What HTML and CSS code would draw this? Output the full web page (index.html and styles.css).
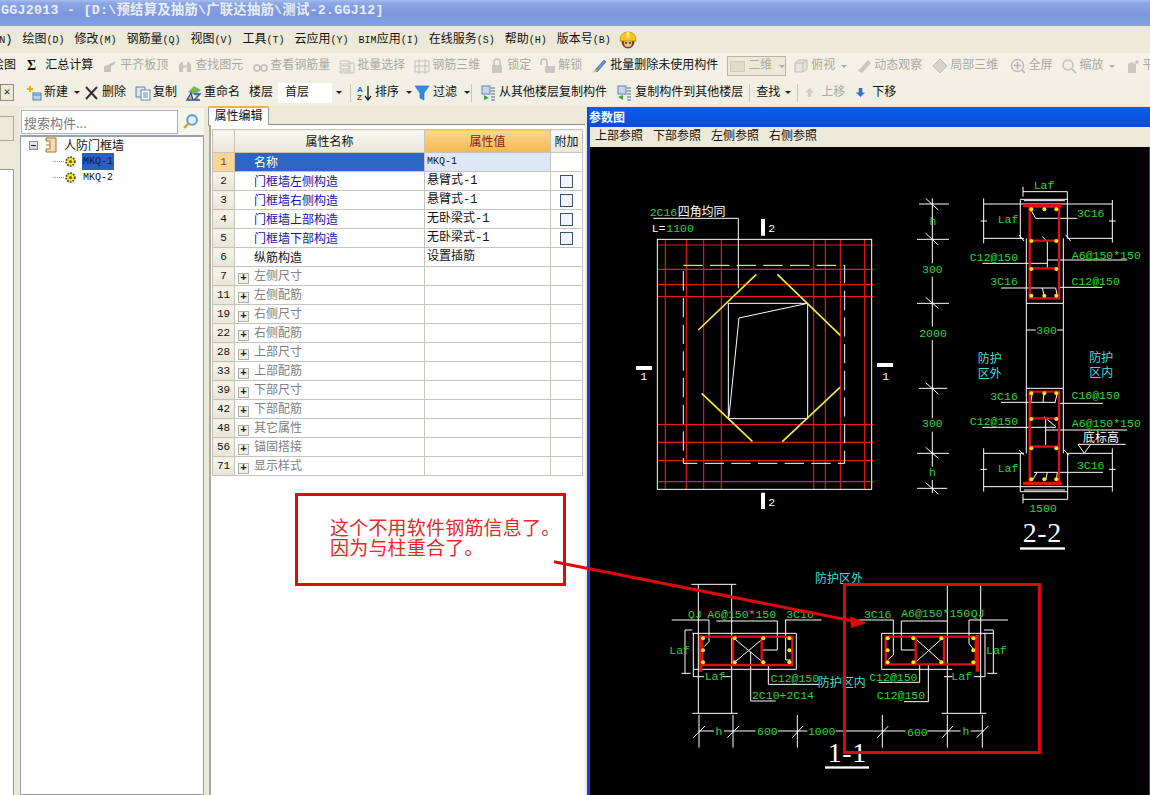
FILE: index.html
```html
<!DOCTYPE html>
<html lang="zh">
<head>
<meta charset="utf-8">
<title>GGJ2013</title>
<link rel="stylesheet" href="styles.css">
</head>
<body>
<div class="app">
  <div class="titlebar">GGJ2013 - [D:\预结算及抽筋\广联达抽筋\测试-2.GGJ12]</div>

  <div class="menubar">
    <span class="clip">(<span class="key">N</span>)</span>
    <span>绘图<span class="key">(D)</span></span>
    <span>修改<span class="key">(M)</span></span>
    <span>钢筋量<span class="key">(Q)</span></span>
    <span>视图<span class="key">(V)</span></span>
    <span>工具<span class="key">(T)</span></span>
    <span>云应用<span class="key">(Y)</span></span>
    <span><span class="key">BIM</span>应用<span class="key">(I)</span></span>
    <span>在线服务<span class="key">(S)</span></span>
    <span>帮助<span class="key">(H)</span></span>
    <span>版本号<span class="key">(B)</span></span>
    <svg class="avatar" viewBox="0 0 18 18"><circle cx="9" cy="11" r="6.5" fill="#7a4a20"/><circle cx="9" cy="12" r="4" fill="#f0c090"/><path d="M1 10C1 3 5 1 9 1s8 2 8 9z" fill="#f5c518" stroke="#a07808" stroke-width=".6"/><rect x="7.5" y="1" width="3" height="6" fill="#ffe680"/><circle cx="7" cy="12" r=".9" fill="#222"/><circle cx="11" cy="12" r=".9" fill="#222"/></svg>
  </div>

  <div class="toolbar one">
    <span class="clip tool">绘图</span>
    <span class="sigma">Σ</span>
    <span class="tool">汇总计算</span>
    <span class="tool off"><svg class="ic" viewBox="0 0 16 16"><path d="M2 14V8l5-1v7zM7 14V6l7-3-2 4-3 1v6z" fill="#c4c4bc"/></svg>平齐板顶</span>
    <span class="tool off"><svg class="ic" viewBox="0 0 16 16"><path d="M2 14V7l2-3h2v10zM10 14V4h2l2 3v7z" fill="#c4c4bc"/><rect x="6" y="7" width="4" height="3" fill="#d4d4cc"/></svg>查找图元</span>
    <span class="tool off"><svg class="ic" viewBox="0 0 16 16"><circle cx="5" cy="10" r="3" fill="none" stroke="#bbb" stroke-width="1.5"/><circle cx="12" cy="10" r="3" fill="none" stroke="#bbb" stroke-width="1.5"/></svg>查看钢筋量</span>
    <span class="tool off"><svg class="ic" viewBox="0 0 16 16"><path d="M1 3h9v3H1zM1 8h9v3H1zM1 13h9v2H1zM11 5h4v10h-4z" fill="none" stroke="#c0c0b8"/></svg>批量选择</span>
    <span class="tool off"><svg class="ic" viewBox="0 0 16 16"><path d="M1 3h14v11H1zM5 1v15M11 1v15M1 8h14" fill="none" stroke="#c0c0b8"/></svg>钢筋三维</span>
    <span class="tool off"><svg class="ic" viewBox="0 0 16 16"><rect x="3" y="7" width="10" height="8" fill="#c8c8c0"/><path d="M5 7V4a3 3 0 0 1 6 0v3" fill="none" stroke="#c0c0b8" stroke-width="1.5"/></svg>锁定</span>
    <span class="tool off"><svg class="ic" viewBox="0 0 16 16"><rect x="5" y="8" width="10" height="7" fill="#c8c8c0"/><path d="M1 7V4a3 3 0 0 1 6 0v4" fill="none" stroke="#c0c0b8" stroke-width="1.5"/></svg>解锁</span>
    <span class="tool nudge"><svg class="ic" viewBox="0 0 16 16"><path d="M3 12 12 2l2 2-9 10z" fill="#6f93d0" stroke="#36558f" stroke-width=".6"/><path d="M1 15l2-4 2 2z" fill="#e8c050"/></svg>批量删除未使用构件</span>
    <span class="combo-off"><span class="combo-swatch"></span>二维<span class="arrow grey"></span></span>
    <span class="tool off"><svg class="ic" viewBox="0 0 16 16"><path d="M2 5l4-3h8v9l-4 3H2zM2 5h8v9M10 5l4-3" fill="#e6e6dc" stroke="#bcbcb4"/></svg>俯视<span class="arrow grey"></span></span>
    <span class="tool off"><svg class="ic" viewBox="0 0 16 16"><path d="M2 13 12 2l3 3-9 10z" fill="#c8c8c0"/></svg>动态观察</span>
    <span class="tool off nudge"><svg class="ic" viewBox="0 0 16 16"><path d="M8 1l7 7-7 7-7-7z" fill="#d4d4cc" stroke="#bbb"/></svg>局部三维</span>
    <span class="sep tight"></span>
    <span class="tool off"><svg class="ic" viewBox="0 0 16 16"><circle cx="7.5" cy="7.5" r="6" fill="#eee" stroke="#bcbcb4" stroke-width="1.5"/><path d="M7.5 4v7M4 7.5h7M12 12l3 3" stroke="#b4b4ac" stroke-width="1.5"/></svg>全屏</span>
    <span class="tool off"><svg class="ic" viewBox="0 0 16 16"><circle cx="7" cy="7" r="5" fill="none" stroke="#c0c0b8" stroke-width="1.5"/><path d="M11 11l4 4" stroke="#b4b4ac" stroke-width="1.5"/></svg>缩放<span class="arrow grey"></span></span>
    <span class="tool off"><svg class="ic" viewBox="0 0 16 16"><path d="M4 15V6l4-2 4 2v9z" fill="#c8c8c0"/><path d="M11 4h4M13 2v4" stroke="#b4b4ac"/></svg>平</span>
  </div>

  <div class="toolbar two">
    <span class="closebox">✕</span>
    <span class="tool first"><svg class="ic" viewBox="0 0 16 16"><path d="M1 4h6M4 1v6" stroke="#e8b010" stroke-width="2"/><rect x="7" y="8" width="8" height="7" fill="#bcd0ee" stroke="#5a7fb8"/><path d="M7 10h8" stroke="#5a7fb8"/></svg>新建<span class="arrow"></span></span>
    <span class="tool"><svg class="ic" viewBox="0 0 16 16"><path d="M2 2l11 12M13 2 2 14" stroke="#333" stroke-width="2"/></svg>删除</span>
    <span class="tool"><svg class="ic" viewBox="0 0 16 16"><rect x="1" y="2" width="9" height="10" fill="#dbe6f6" stroke="#6282b4"/><rect x="6" y="5" width="9" height="10" fill="#fff" stroke="#6282b4"/><path d="M8 8h5M8 10h5M8 12h5" stroke="#6282b4"/></svg>复制</span>
    <span class="tool"><svg class="ic" viewBox="0 0 16 16"><path d="M8 1l7 4-6 5-7-3z" fill="#7cb45a"/><path d="M1 15l4-7 2 7zM8 9h6l-6 6h6" stroke="#2a54a0" stroke-width="1.4" fill="#e8c050"/></svg>重命名</span>
    <span class="floor">楼层</span>
    <span class="floor-combo">首层<span class="arrow"></span></span>
    <span class="sep lead"></span>
    <span class="tool sort"><svg class="ic" viewBox="0 0 16 16"><text x="1" y="7" class="az a">A</text><text x="1" y="15" class="az z">Z</text><path d="M12 1v13M9 11l3 4 3-4" fill="none" stroke="#222" stroke-width="1.3"/></svg>排序<span class="arrow"></span></span>
    <span class="tool sort"><svg class="ic" viewBox="0 0 16 16"><path d="M1 1h14L10 8v7l-4-2V8z" fill="#2f8fe8" stroke="#1a5fb0" stroke-width=".6"/></svg>过滤<span class="arrow"></span></span>
    <span class="sep midsep"></span>
    <span class="tool sort"><svg class="ic" viewBox="0 0 16 16"><rect x="2" y="1" width="8" height="8" fill="#c6d6ee" stroke="#5a7fb8"/><path d="M4 10v5l5-2z" fill="#3aa040"/><path d="M11 3h4M11 6h4M11 9h4M11 12h4M11 15h4" stroke="#3a6a8a"/></svg>从其他楼层复制构件</span>
    <span class="tool sort"><svg class="ic" viewBox="0 0 16 16"><rect x="2" y="1" width="8" height="8" fill="#c6d6ee" stroke="#5a7fb8"/><path d="M2 12l5 3v-5z" fill="#3aa040"/><path d="M11 3h4M11 6h4M11 9h4M11 12h4M11 15h4" stroke="#3a6a8a"/></svg>复制构件到其他楼层</span>
    <span class="sep short"></span>
    <span class="plain">查找<span class="arrow"></span></span>
    <span class="sep short"></span>
    <span class="tool off updown"><svg class="ic small" viewBox="0 0 12 12"><path d="M6 1l5 5H8v5H4V6H1z" fill="#cfcfc6"/></svg>上移</span>
    <span class="tool updown"><svg class="ic small" viewBox="0 0 12 12"><path d="M6 11l5-5H8V1H4v5H1z" fill="#3a70c8"/></svg>下移</span>
  </div>

  <div class="workspace">
    <div class="strip"><div class="strip-tab"></div><div class="strip-body"></div></div>

    <div class="tree-panel">
      <div class="search">
        <div class="search-input">搜索构件...</div>
        <svg class="search-ic" viewBox="0 0 16 16"><circle cx="9.5" cy="6.5" r="4.5" fill="#eaf4fb" stroke="#5aa0d8" stroke-width="2"/><path d="M6 10l-4 4" stroke="#e0a040" stroke-width="2.4"/></svg>
      </div>
      <div class="tree">
        <div class="tree-row root">
          <span class="minus"></span>
          <svg class="ic" viewBox="0 0 16 16"><path d="M3 1h10v14H3V12h4V4H3z" fill="#f5dcb4" stroke="#b06a20"/><path d="M3 8h4" stroke="#b06a20"/></svg>
          <span>人防门框墙</span>
        </div>
        <div class="tree-row leaf">
          <span class="dots"></span>
          <svg class="gear" viewBox="0 0 12 12"><circle cx="6" cy="6" r="4" fill="#ffee00" stroke="#444" stroke-width="1.6" stroke-dasharray="1.6 1"/><circle cx="6" cy="6" r="1.5" fill="#806000"/></svg>
          <span class="mkq selected">MKQ-1</span>
        </div>
        <div class="tree-row leaf">
          <span class="dots"></span>
          <svg class="gear" viewBox="0 0 12 12"><circle cx="6" cy="6" r="4" fill="#ffee00" stroke="#444" stroke-width="1.6" stroke-dasharray="1.6 1"/><circle cx="6" cy="6" r="1.5" fill="#806000"/></svg>
          <span class="mkq">MKQ-2</span>
        </div>
      </div>
    </div>

    <div class="props">
      <div class="tabs"><div class="tab">属性编辑</div></div>
      <div class="props-body">
        <table class="grid">
          <colgroup><col class="c-num"><col class="c-name"><col class="c-val"><col class="c-add"></colgroup>
          <thead>
            <tr><th class="corner"></th><th>属性名称</th><th class="th-val">属性值</th><th>附加</th></tr>
          </thead>
          <tbody>
            <tr class="active"><td class="num">1</td><td class="name">名称</td><td class="val mono">MKQ-1</td><td></td></tr>
            <tr class="link"><td class="num">2</td><td class="name">门框墙左侧构造</td><td class="val">悬臂式-1</td><td class="chk"><span class="box"></span></td></tr>
            <tr class="link"><td class="num">3</td><td class="name">门框墙右侧构造</td><td class="val">悬臂式-1</td><td class="chk"><span class="box"></span></td></tr>
            <tr class="link"><td class="num">4</td><td class="name">门框墙上部构造</td><td class="val">无卧梁式-1</td><td class="chk"><span class="box"></span></td></tr>
            <tr class="link"><td class="num">5</td><td class="name">门框墙下部构造</td><td class="val">无卧梁式-1</td><td class="chk"><span class="box"></span></td></tr>
            <tr><td class="num">6</td><td class="name">纵筋构造</td><td class="val">设置插筋</td><td></td></tr>
            <tr class="group"><td class="num">7</td><td class="name"><span class="plus">+</span>左侧尺寸</td><td></td><td></td></tr>
            <tr class="group"><td class="num">11</td><td class="name"><span class="plus">+</span>左侧配筋</td><td></td><td></td></tr>
            <tr class="group"><td class="num">19</td><td class="name"><span class="plus">+</span>右侧尺寸</td><td></td><td></td></tr>
            <tr class="group"><td class="num">22</td><td class="name"><span class="plus">+</span>右侧配筋</td><td></td><td></td></tr>
            <tr class="group"><td class="num">28</td><td class="name"><span class="plus">+</span>上部尺寸</td><td></td><td></td></tr>
            <tr class="group"><td class="num">33</td><td class="name"><span class="plus">+</span>上部配筋</td><td></td><td></td></tr>
            <tr class="group"><td class="num">39</td><td class="name"><span class="plus">+</span>下部尺寸</td><td></td><td></td></tr>
            <tr class="group"><td class="num">42</td><td class="name"><span class="plus">+</span>下部配筋</td><td></td><td></td></tr>
            <tr class="group"><td class="num">48</td><td class="name"><span class="plus">+</span>其它属性</td><td></td><td></td></tr>
            <tr class="group"><td class="num">56</td><td class="name"><span class="plus">+</span>锚固搭接</td><td></td><td></td></tr>
            <tr class="group"><td class="num">71</td><td class="name"><span class="plus">+</span>显示样式</td><td></td><td></td></tr>
          </tbody>
        </table>
      </div>
    </div>

    <div class="param">
      <div class="param-title">参数图</div>
      <div class="param-menu"><span>上部参照</span><span>下部参照</span><span>左侧参照</span><span>右侧参照</span></div>
      <svg class="cad" viewBox="591 147 559 648">
        <!-- plan -->
        <g transform="translate(620 190) scale(.33333)">
          <path class="rl" d="M139 148V900M202 148V900M254 148V900M307 148V900M584 148V900M619 148V900M664 148V900M737 148V900M115 165H762M115 238H762M115 284H762M115 320H762M115 704H762M115 757H762M115 812H762M115 875H762"/>
          <rect class="wl" x="115" y="148" width="643" height="750"/>
          <rect class="wl dash" x="193" y="226" width="484" height="594"/>
          <rect class="wl" x="328" y="340" width="238" height="346"/>
          <path class="wl" d="M566 340 360 384 330 680M103 85H358V295"/>
          <path class="yl" d="M238 420 412 253M475 253 664 436M248 610 400 754M490 755 663 592"/>
          <path class="bar" d="M432 87V137M432 908V957M51 534H99M774 525H822"/>
          <text class="t g" x="92" y="77">2C16</text><text class="t w cjk" x="176" y="77">四角均同</text>
          <text class="t w" x="98" y="125">L=</text><text class="t g" x="142" y="125">1100</text>
          <text class="t w" x="448" y="125">2</text><text class="t w" x="448" y="948">2</text>
          <text class="t w" x="64" y="570">1</text><text class="t w" x="790" y="570">1</text>
        </g>
        <!-- section 2-2 -->
        <g transform="translate(910 170) scale(.33333)">
          <path class="wl" d="M70 85V280M70 320V470M70 510V745M70 785V890M70 930V970M30 102H120M24 208H120M24 400H120M30 655H115M24 850H120M24 955H115M50 85 88 120M50 190 88 225M50 382 88 415M50 638 88 672M50 832 88 865M50 938 88 972"/>
          <path class="wl" d="M224 85V220M224 102H610M224 205H345M475 205H610M610 90V218M334 88V205M475 65V205M334 88H475M342 65H475M345 92H468M352 205V655M463 205V655M352 400H463M352 655H463M352 480H380M445 480H463M352 655V850M463 655V850M224 850H345M475 850H610M224 950H610M224 835V965M610 835V965M334 850V965M476 850V988M334 965H476M342 988H476M342 50V80M342 972V1000M345 960H468"/>
          <path class="wl" d="M215 153H234M600 153H620M215 898H234M600 898H620M330 195 345 213M470 195 485 213M330 840 345 856M465 840 480 856"/>
          <path class="wl" d="M365 118 380 145H505M400 200 415 215V295M415 280H220M415 270H655M276 354H440M400 354 405 375M440 354 445 378M450 352H580M276 697H440M370 670 365 697M405 670 402 697M445 670 438 697M450 700H582M220 772H440M410 745V825M410 780H655M405 740 440 770M507 823H650M507 823 526 850 545 823M375 907H582M385 907 370 930M415 907 410 930M445 907 442 930"/>
          <path class="rb" d="M362 110V385H450V110ZM362 212H450M362 295H450M362 665V940H450V665ZM362 745H450M362 830H450"/>
          <path class="rb fat" d="M342 107H458M342 940H458"/>
          <g class="dots-y">
            <circle cx="367" cy="118" r="6"/><circle cx="406" cy="118" r="6"/><circle cx="442" cy="118" r="6"/><circle cx="367" cy="213" r="6"/><circle cx="442" cy="213" r="6"/><circle cx="367" cy="297" r="6"/><circle cx="442" cy="297" r="6"/><circle cx="367" cy="377" r="6"/><circle cx="406" cy="377" r="6"/><circle cx="442" cy="377" r="6"/><circle cx="367" cy="670" r="6"/><circle cx="406" cy="670" r="6"/><circle cx="442" cy="670" r="6"/><circle cx="367" cy="747" r="6"/><circle cx="442" cy="747" r="6"/><circle cx="367" cy="835" r="6"/><circle cx="442" cy="835" r="6"/><circle cx="367" cy="928" r="6"/><circle cx="406" cy="928" r="6"/><circle cx="442" cy="928" r="6"/>
          </g>
          <g class="mid">
            <text class="t g" x="72" y="165">h</text><text class="t g" x="70" y="308">300</text><text class="t g" x="72" y="500">2000</text><text class="t g" x="70" y="772">300</text><text class="t g" x="70" y="917">h</text>
            <text class="t g" x="405" y="58">Laf</text><text class="t g" x="297" y="158">Laf</text><text class="t g" x="545" y="140">3C16</text><text class="t g" x="255" y="272">C12@150</text><text class="t g" x="592" y="266">A6@150*150</text><text class="t g" x="285" y="344">3C16</text><text class="t g" x="560" y="346">C12@150</text><text class="t g" x="413" y="491">300</text>
            <text class="t c cjk" x="242" y="578">防护</text><text class="t c cjk" x="242" y="624">区外</text><text class="t c cjk" x="577" y="576">防护</text><text class="t c cjk" x="577" y="622">区内</text>
            <text class="t g" x="285" y="690">3C16</text><text class="t g" x="560" y="686">C16@150</text><text class="t g" x="255" y="765">C12@150</text><text class="t g" x="592" y="770">A6@150*150</text><text class="t w cjk" x="576" y="817">底标高</text><text class="t g" x="545" y="896">3C16</text><text class="t g" x="297" y="906">Laf</text><text class="t g" x="402" y="1025">1500</text>
            <text class="big" x="400" y="1115">2-2</text>
          </g>
          <rect class="ul" x="333" y="1132" width="135" height="7"/>
        </g>
        <!-- section 1-1 -->
        <g transform="translate(660 565) scale(.33333)">
          <path class="wl" d="M38 165H150M172 168H355M378 165H488M600 165H703M727 168H865M930 165H1047M218 58V445M118 58V445M97 58H232M100 445H236M865 58V445M965 58V445M848 445H982M100 205H412M668 205H1005M105 313H412M668 313H880M412 205V313M668 205V313M78 195V325M78 195H100M68 325H95M103 205V335M103 335H135M190 335H215M1003 195V325M985 325H1015M975 195H1003M978 205V335M945 335H978M855 335H880"/>
          <path class="wl" d="M150 165V230L135 245M355 168V255H310M380 165V285H395M328 300V358H480M275 260V408H350M703 165V270L688 283M727 168V255H770M782 300V352H660M808 300V410H735M930 165V235L945 255M225 220 313 293M313 220 225 293M768 220 850 293M850 220 768 293"/>
          <path class="wl" d="M120 498H165M195 498H290M357 498H445M530 498H740M805 498H905M935 498H975M120 450V548M222 450V548M415 450V548M670 450V548M865 450V548M970 450V548M103 518 138 483M205 518 240 483M400 518 432 483M655 518 688 483M850 518 882 483M953 518 988 483"/>
          <path class="rb" d="M130 215H400V300H130ZM222 215V295M308 215V295M680 215H950V298H680ZM770 215V295M855 215V295"/>
          <path class="rb fat" d="M125 210V320M955 210V320"/>
          <g class="dots-y">
            <circle cx="132" cy="220" r="6"/><circle cx="132" cy="256" r="6"/><circle cx="132" cy="292" r="6"/><circle cx="227" cy="220" r="6"/><circle cx="227" cy="292" r="6"/><circle cx="313" cy="220" r="6"/><circle cx="313" cy="292" r="6"/><circle cx="391" cy="220" r="6"/><circle cx="391" cy="256" r="6"/><circle cx="391" cy="292" r="6"/><circle cx="686" cy="220" r="6"/><circle cx="686" cy="256" r="6"/><circle cx="686" cy="292" r="6"/><circle cx="763" cy="220" r="6"/><circle cx="763" cy="292" r="6"/><circle cx="847" cy="220" r="6"/><circle cx="847" cy="292" r="6"/><circle cx="943" cy="220" r="6"/><circle cx="943" cy="256" r="6"/><circle cx="943" cy="292" r="6"/>
          </g>
          <g class="mid">
            <text class="t c cjk" x="540" y="55">防护区外</text><text class="t g" x="108" y="158">QJ</text><text class="t g" x="248" y="158">A6@150*150</text><text class="t g" x="423" y="158">3C16</text><text class="t g" x="656" y="158">3C16</text><text class="t g" x="830" y="155">A6@150*150</text><text class="t g" x="956" y="155">QJ</text><text class="t g" x="62" y="268">Laf</text><text class="t g" x="168" y="344">Laf</text><text class="t g" x="408" y="352">C12@150</text><text class="t c cjk" x="548" y="365">防护区内</text><text class="t g" x="703" y="347">C12@150</text><text class="t g" x="908" y="344">Laf</text><text class="t g" x="1012" y="268">Laf</text><text class="t g" x="726" y="402">C12@150</text><text class="t g" x="372" y="403">2C10+2C14</text><text class="t g" x="180" y="510">h</text><text class="t g" x="325" y="511">600</text><text class="t g" x="488" y="511">1000</text><text class="t g" x="775" y="513">600</text><text class="t g" x="921" y="511">h</text>
            <text class="big" x="565" y="590">1-1</text>
          </g>
          <rect class="ul" x="498" y="604" width="132" height="7"/>
        </g>
      </svg>
    </div>
  </div>

  <div class="note">这个不用软件钢筋信息了。<br>因为与柱重合了。</div>
  <div class="highlight"></div>
  <svg class="pointer" viewBox="0 0 1150 795"><path class="pointer-line" d="M554 561.7 853 621"/><path class="pointer-head" d="M867 623 850 616.500 851 628z"/></svg>
</div>
</body>
</html>
```

FILE: styles.css
```css
html, body { margin: 0; padding: 0; overflow: hidden; }
* { box-sizing: border-box; }
.app {
  position: relative;
  width: 1150px;
  height: 795px;
  overflow: hidden;
  display: flex;
  flex-direction: column;
  background: #ece9d8;
  font: 12px/1 "Liberation Mono", "Noto Sans CJK SC", monospace;
  color: #111;
}
.titlebar {
  height: 26px;
  flex: none;
  padding: 4px 0 0 1px;
  background: linear-gradient(#a4bdee 0, #8ca6e4 12%, #7b96dd 55%, #85a3e6 100%);
  color: #e9edf6;
  font-size: 13.33px;
  letter-spacing: .25px;
  font-weight: 700;
  white-space: nowrap;
}
.key { font-size: 10px; }
.menubar {
  height: 27px;
  flex: none;
  display: flex;
  align-items: center;
  gap: 10px;
  white-space: nowrap;
}
.clip { margin-left: -8px; }
.avatar { width: 18px; height: 18px; margin-left: -2px; }
.toolbar {
  flex: none;
  display: flex;
  align-items: center;
  white-space: nowrap;
  gap: 9px;
}
.toolbar.one { height: 26px; background: #f3f1e6; }
.toolbar.two { height: 27px; background: #f1efe3; gap: 9px; }
.tool { display: inline-flex; align-items: center; gap: 2px; }
.tool.off { color: #a9a9a0; }
.tool.nudge { margin-left: 1px; }
.ic { width: 16px; height: 16px; flex: none; }
.ic.small { width: 11px; height: 11px; }
.sigma { font: 700 14px "Liberation Serif", serif; margin-left: 2px; }
.sep { width: 1px; height: 18px; background: #c9c6b4; }
.sep.tight { margin: 0 -3px; }
.sep.short { margin: 0 -3px; }
.sep.lead { margin: 0 -4px; }
.sep.midsep { margin: 0 -1px; }
.arrow {
  width: 0; height: 0;
  margin-left: 4px;
  border: 3px solid transparent;
  border-top: 3px solid #222;
  border-bottom: 0;
}
.arrow.grey { border-top-color: #aaa; }
.combo-off {
  width: 62px; height: 20px;
  display: inline-flex;
  align-items: center;
  gap: 3px;
  padding-left: 2px;
  margin-right: -2px;
  border: 1px solid #b6b4a6;
  background: #ece9d8;
  color: #a9a9a0;
}
.combo-swatch { width: 15px; height: 11px; background: #dfdccb; border: 1px solid #cfccba; }
.closebox {
  width: 14px; height: 17px;
  margin-right: 3px;
  border: 1px solid #8a8a80;
  background: #ece9d8;
  color: #333;
  font-size: 11px;
  text-align: center;
  line-height: 15px;
}
.first .arrow { margin-right: -5px; }
.floor { margin-right: -4px; }
.floor-combo {
  width: 67px; height: 20px;
  display: inline-flex;
  align-items: center;
  justify-content: space-between;
  padding: 0 3px 0 7px;
  background: linear-gradient(90deg, #fff 80%, #f1efe3 80%);
}
.tool.sort { gap: 3px; }
.tool.sort .arrow { margin-right: -7px; }
.plain { display: inline-flex; align-items: center; }
.plain .arrow { margin-left: 5px; }
.updown { gap: 6px; margin-right: 1px; }
.az { font: 700 8px "Liberation Sans", sans-serif; }
.az.a { fill: #2a5fc0; }
.az.z { fill: #c02020; }

.workspace { flex: 1; min-height: 0; display: flex; }
.strip { width: 14px; flex: none; margin-right: 6px; display: flex; flex-direction: column; }
.strip-tab { height: 25px; margin-top: 10px; border: 1px solid #a8a8a0; border-left: 0; }
.strip-body { flex: 1; margin-top: 28px; background: #fff; border-right: 1px solid #9a9a92; border-top: 1px solid #9a9a92; }
.tree-panel { width: 184px; flex: none; display: flex; flex-direction: column; margin-top: 2px; }
.search { height: 27px; flex: none; display: flex; align-items: center; background: #f6f5ec; padding-right: 3px; }
.search-input {
  width: 157px; height: 24px;
  margin-left: 1px;
  padding: 5px 2px;
  background: #fff;
  border: 1px solid #a9b4c0;
  color: #7a7a7a;
  font-family: "Noto Sans CJK SC", sans-serif;
  font-size: 13px;
}
.search-ic { width: 17px; height: 17px; margin-left: 4px; }
.tree { flex: 1; background: #fff; border: 1px solid #9aa0a8; border-top-width: 2px; padding-top: 0; font-family: "Noto Sans CJK SC", sans-serif; }
.tree-row { display: flex; align-items: center; height: 16px; }
.root { padding-left: 8px; gap: 5px; }
.minus {
  width: 9px; height: 9px;
  border: 1px solid #8a8a8a;
  background: linear-gradient(#eee, #cfcfc8);
  position: relative;
}
.minus::after { content: ""; position: absolute; left: 1px; right: 1px; top: 3px; height: 1px; background: #222; }
.leaf { padding-left: 32px; }
.dots { width: 11px; height: 1px; border-top: 1px dotted #999; }
.gear { width: 13px; height: 13px; margin-right: 5px; }
.mkq { font: 10px "Liberation Mono", monospace; padding: 3px 1px; }
.selected { background: #2b5fc0; color: #0b1a3a; }

.props { width: 377px; flex: none; margin-left: 4px; display: flex; flex-direction: column; }
.tabs { height: 19px; flex: none; background: #ece9d8; border-bottom: 1px solid #8a8a8a; }
.tab {
  width: 61px; height: 20px;
  margin-left: 0;
  padding-top: 1px;
  text-align: center;
  background: #fff;
  border: 1px solid #9a9a9a;
  border-top: 2px solid #efb050;
  border-bottom: 0;
  border-radius: 2px 2px 0 0;
  font-family: "Noto Sans CJK SC", sans-serif;
}
.props-body { flex: 1; background: #fff; border-left: 2px solid #a9a9a0; margin-left: 1px; padding: 4px 0 0 1px; }
.grid { table-layout: fixed; border-collapse: collapse; width: 370px; font-family: "Liberation Mono", "Noto Sans CJK SC", monospace; }
.c-num { width: 22px; }
.c-name { width: 190px; }
.c-val { width: 126px; }
.c-add { width: 32px; }
.grid th {
  height: 23px;
  padding: 0;
  font-weight: 400;
  font-family: "Noto Sans CJK SC", sans-serif;
  background: linear-gradient(#f8f7f1, #e9e6d8);
  border: 1px solid #c4c4bc;
}
.grid .th-val { background: linear-gradient(#fbd98f, #f6b650); color: #8c1a1a; }
.grid td { height: 19px; padding: 0; border: 1px solid #c4c4bc; }
.grid .num { text-align: center; background: linear-gradient(#f6f4ea, #e8e5d7); font-size: 11px; }
.grid .name { padding-left: 19px; font-family: "Noto Sans CJK SC", sans-serif; }
.grid .val { padding-left: 2px; font-family: "Liberation Mono", "Noto Sans CJK SC", monospace; }
.grid .mono { font-size: 10px; }
.link .name { color: #1414a8; }
.active .num { background: #fcd594; color: #8c3a00; }
.grid .active .name { background: #2f65c2; color: #fff; }
.grid .active .val { background: #dde7f5; }
.chk { text-align: center; }
.box { display: block; width: 13px; height: 13px; margin: 0 auto; background: #f1f4f8; border: 1px solid #3a5470; }
.grid .group .name { padding-left: 3px; color: #808080; }
.plus {
  display: inline-block;
  width: 11px; height: 11px;
  margin-right: 5px;
  border: 1px solid #b0b0a8;
  background: #f0efe8;
  color: #222;
  font: 700 11px/9px "Liberation Mono", monospace;
  text-align: center;
  vertical-align: -1px;
}

.param {
  width: 563px;
  flex: none;
  margin-left: 2px;
  margin-top: 1px;
  display: flex;
  flex-direction: column;
  background: #0a48dc;
  padding-left: 3px;
}
.param-title {
  height: 20px;
  flex: none;
  padding: 4px 0 0 0;
  margin-left: -1px;
  background: linear-gradient(#0a60ea, #0a4ad8);
  color: #fff;
  font-family: "Noto Sans CJK SC", sans-serif;
  font-weight: 700;
}
.param-menu {
  height: 20px;
  flex: none;
  display: flex;
  align-items: center;
  gap: 10px;
  padding-left: 5px;
  background: #ece9d8;
}
.cad { flex: 1; display: block; width: 559px; height: 648px; background: #000; }
.wl { fill: none; stroke: #fff; stroke-width: 3; }
.wl.dash { stroke-dasharray: 58 22; }
.rl { fill: none; stroke: #e81a1a; stroke-width: 3.4; }
.yl { fill: none; stroke: #f5e93a; stroke-width: 5; }
.bar { fill: none; stroke: #fff; stroke-width: 12; }
.rb { fill: none; stroke: #dd1111; stroke-width: 7; }
.rb.fat { stroke-width: 10; }
.dots-y { fill: #ffe81a; }
.ul { fill: #fff; }
.t { font: 34.5px "Liberation Mono", "Noto Sans CJK SC", monospace; }
.cjk { font-family: "Noto Sans CJK SC", sans-serif; font-size: 36px; }
.g { fill: #2fd53c; }
.w { fill: #fff; }
.c { fill: #42dcdc; }
.mid .t, .mid .big { text-anchor: middle; }
.big { font: 84px "Liberation Serif", serif; fill: #fff; letter-spacing: 2px; }

.note {
  position: absolute;
  left: 295px; top: 493px;
  width: 271px; height: 93px;
  padding: 21px 0 0 32px;
  border: 3px solid #e00a0a;
  color: #e62828;
  font: 19px/20px "Noto Sans CJK SC", sans-serif;
  letter-spacing: .2px;
  white-space: nowrap;
}
.highlight {
  position: absolute;
  left: 843px; top: 583px;
  width: 198px; height: 171px;
  border: 3px solid #dc0a0a;
}
.pointer { position: absolute; inset: 0; width: 1150px; height: 795px; pointer-events: none; }
.pointer-line { fill: none; stroke: #dc0a0a; stroke-width: 3; }
.pointer-head { fill: #dc0a0a; }
```
